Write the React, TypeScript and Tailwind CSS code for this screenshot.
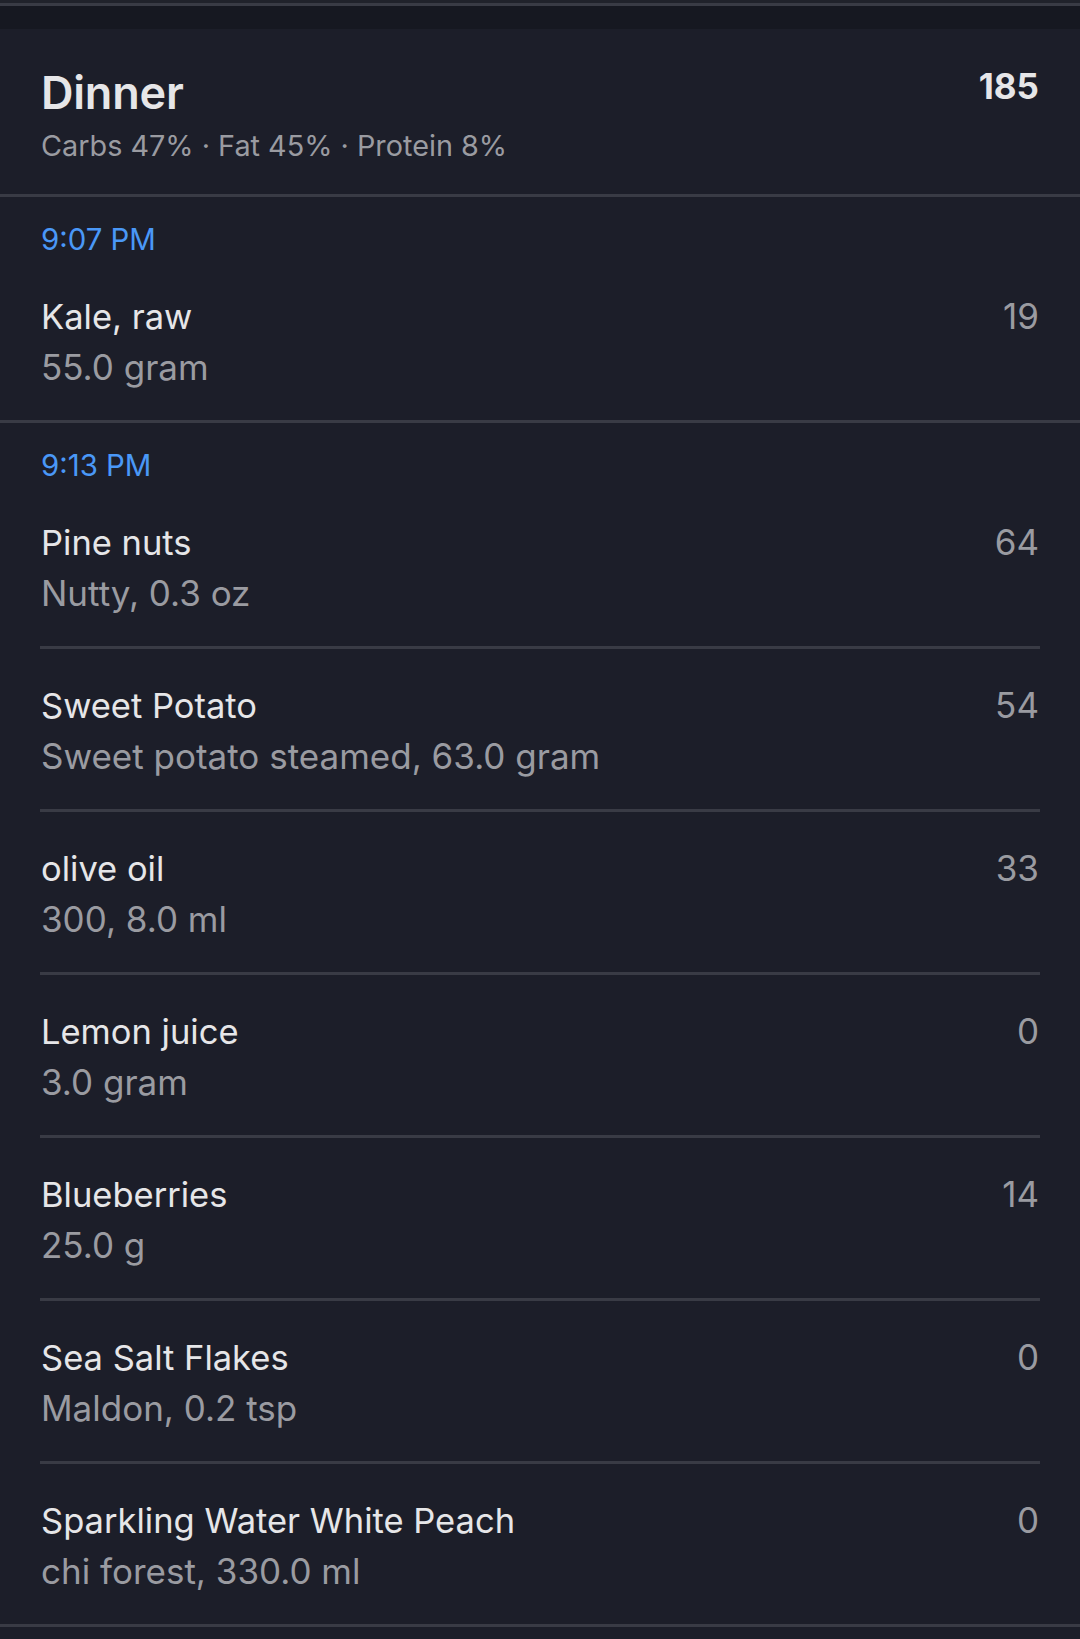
import React from "react";

type Item = { name: string; detail: string; cal: string };
type Group = { time: string; items: Item[] };

const groups: Group[] = [
  { time: "9:07 PM", items: [{ name: "Kale, raw", detail: "55.0 gram", cal: "19" }] },
  {
    time: "9:13 PM",
    items: [
      { name: "Pine nuts", detail: "Nutty, 0.3 oz", cal: "64" },
      { name: "Sweet Potato", detail: "Sweet potato steamed, 63.0 gram", cal: "54" },
      { name: "olive oil", detail: "300, 8.0 ml", cal: "33" },
      { name: "Lemon juice", detail: "3.0 gram", cal: "0" },
      { name: "Blueberries", detail: "25.0 g", cal: "14" },
      { name: "Sea Salt Flakes", detail: "Maldon, 0.2 tsp", cal: "0" },
      { name: "Sparkling Water White Peach", detail: "chi forest, 330.0 ml", cal: "0" },
    ],
  },
];

export default function App() {
  return (
    <div
      className="w-[1080px] min-h-[1639px] bg-[#1c1e29] antialiased"
      style={{ fontFamily: "Inter, 'Noto Sans', sans-serif" }}
    >
      <div className="h-[3px] bg-[#20222b]" />
      <div className="h-[3px] bg-[#393b45]" />
      <div className="h-[23px] bg-[#161821]" />

      <div className="flex items-start justify-between px-[41px] pt-[37px] pb-[28px]">
        <div className="flex flex-col">
          <div className="text-[45px] leading-[54px] font-semibold text-[#e6e6e8] tracking-[-0.2px]">Dinner</div>
          <div className="mt-[6px] text-[28.8px] leading-[40px] text-[#9a9ba1]">
            Carbs 47% · Fat 45% · Protein 8%
          </div>
        </div>
        <div className="text-[35px] leading-[40px] font-bold text-[#e6e6e8]">185</div>
      </div>
      <div className="h-[3px] bg-[#393b45]" />

      {groups.map((g) => (
        <div key={g.time}>
          <div className="px-[41px] pt-[23px] text-[29.4px] leading-[40px] text-[#4a98f7]">{g.time}</div>
          <div className="flex flex-col">
            {g.items.map((it, i) => (
              <div key={it.name}>
                {i > 0 && <div className="mx-[40px] h-[3px] bg-[#393b45]" />}
                <div className="flex items-start justify-between px-[41px] pt-[31px] pb-[27px]">
                  <div className="flex flex-col">
                    <div className="text-[34.5px] leading-[51px] text-[#e6e6e8]">{it.name}</div>
                    <div className="text-[35px] leading-[51px] text-[#9a9ba1]">{it.detail}</div>
                  </div>
                  <div className="text-[35px] leading-[51px] text-[#9a9ba1]">{it.cal}</div>
                </div>
              </div>
            ))}
          </div>
          <div className="h-[3px] bg-[#393b45]" />
        </div>
      ))}
    </div>
  );
}
